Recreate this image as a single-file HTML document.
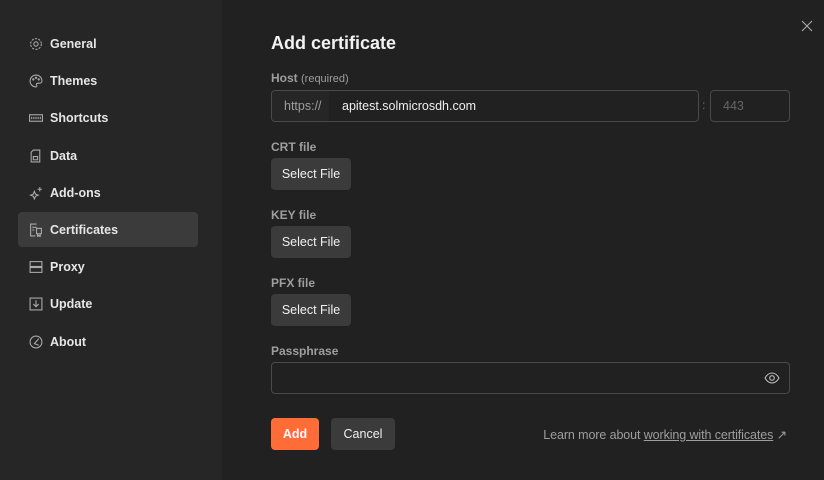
<!DOCTYPE html>
<html><head><style>
*{box-sizing:border-box;margin:0;padding:0}
body{width:824px;height:480px;background:#212121;font-family:"Liberation Sans",sans-serif;color:#e6e6e6;position:relative;overflow:hidden}
.side{position:absolute;left:0;top:0;width:222px;height:480px;background:#262626}
.item{position:absolute;left:18px;width:180px;height:35px;border-radius:4px;font-size:12.5px;font-weight:bold;color:#e6e6e6;line-height:36px;padding-left:32px}
.item svg{position:absolute;left:11px;top:11px}
.sel{background:#3b3b3b}
.abs{position:absolute}
.lbl{position:absolute;left:271px;font-size:12px;font-weight:bold;color:#9e9e9e}
.btn{position:absolute;left:271px;width:80px;height:32px;background:#3b3b3b;border-radius:4px;font-size:12.5px;color:#f0f0f0;text-align:center;line-height:32px}
.box{position:absolute;border:1px solid #4a4a4a;border-radius:4px}
</style></head><body>
<div class="side">
<div class="item" style="top:26px"><svg width="14" height="14" viewBox="0 0 13 13" fill="none" stroke="#aaa"><circle cx="6.5" cy="6.5" r="2"/><circle cx="6.5" cy="6.5" r="5" stroke-dasharray="2 1.2"/></svg>General</div>
<div class="item" style="top:63px"><svg width="14" height="14" viewBox="0 0 13 13" fill="none" stroke="#aaa"><path d="M6.5 1a5.5 5.5 0 1 0 0 11c1 0 1-1 .5-1.7-.5-.8 0-1.8 1-1.8H10a2 2 0 0 0 2-2C12 3.4 9.6 1 6.5 1z"/><circle cx="4" cy="5" r=".6"/><circle cx="6.5" cy="3.5" r=".6"/><circle cx="9" cy="5" r=".6"/></svg>Themes</div>
<div class="item" style="top:100px"><svg width="14" height="14" viewBox="0 0 13 13" fill="none" stroke="#aaa"><rect x="0.5" y="3.5" width="12" height="6"/><path d="M2.5 5.5v2M4.5 5.5v2M6.5 5.5v2M8.5 5.5v2M10.5 5.5v2"/></svg>Shortcuts</div>
<div class="item" style="top:138px"><svg width="14" height="14" viewBox="0 0 13 13" fill="none" stroke="#aaa"><path d="M4 1h6v11H2V3z"/><rect x="4" y="7" width="4" height="3"/></svg>Data</div>
<div class="item" style="top:175px"><svg width="14" height="14" viewBox="0 0 13 13" fill="none" stroke="#aaa"><path d="M5 5l1 2.5 2.5 1-2.5 1L5 12l-1-2.5L1.5 8.5 4 7.5z M10 1v4 M8 3h4"/></svg>Add-ons</div>
<div class="item sel" style="top:212px"><svg width="14" height="14" viewBox="0 0 13 13" fill="none" stroke="#aaa"><path d="M7 1H1.5v11H6 M3 4h4 M3 6.5h2"/><rect x="7" y="5" width="4.5" height="5"/><path d="M8 10v2.5l1.2-1 1.2 1V10"/></svg>Certificates</div>
<div class="item" style="top:249px"><svg width="14" height="14" viewBox="0 0 13 13" fill="none" stroke="#aaa"><rect x="1" y="1.5" width="11" height="4.5"/><rect x="1" y="7" width="11" height="4.5"/></svg>Proxy</div>
<div class="item" style="top:286px"><svg width="14" height="14" viewBox="0 0 13 13" fill="none" stroke="#aaa"><rect x="1" y="1" width="11" height="11"/><path d="M6.5 3v6 M4 6.5l2.5 2.5 2.5-2.5"/></svg>Update</div>
<div class="item" style="top:324px"><svg width="14" height="14" viewBox="0 0 13 13" fill="none" stroke="#aaa"><circle cx="6.5" cy="6.5" r="5.5"/><path d="M9 3.5L5 8l4 1.5"/></svg>About</div>
</div>
<svg class="abs" style="left:801px;top:20px" width="12" height="12" viewBox="0 0 12 12" stroke="#aaa" stroke-width="1.1"><path d="M1 1l10 10M11 1L1 11"/></svg>
<div class="abs" style="left:271px;top:33px;font-size:18px;font-weight:bold;color:#f2f2f2">Add certificate</div>
<div class="lbl" style="top:71px">Host <span style="font-weight:normal;font-size:11px">(required)</span></div>
<div class="box" style="left:271px;top:90px;width:428px;height:32px;overflow:hidden">
 <div class="abs" style="left:0;top:0;width:57px;height:30px;background:#262626;font-size:12.5px;color:#9e9e9e;line-height:30px;padding-left:12px">https://</div>
 <div class="abs" style="left:70px;top:0;font-size:12.5px;color:#f0f0f0;line-height:30px">apitest.solmicrosdh.com</div>
</div>
<div class="abs" style="left:702px;top:98px;font-size:12px;color:#666">:</div>
<div class="box" style="left:710px;top:90px;width:80px;height:32px;font-size:12.5px;color:#666;line-height:30px;padding-left:12px">443</div>
<div class="lbl" style="top:140px">CRT file</div>
<div class="btn" style="top:158px">Select File</div>
<div class="lbl" style="top:208px">KEY file</div>
<div class="btn" style="top:226px">Select File</div>
<div class="lbl" style="top:276px">PFX file</div>
<div class="btn" style="top:294px">Select File</div>
<div class="lbl" style="top:344px">Passphrase</div>
<div class="box" style="left:271px;top:362px;width:519px;height:32px"></div>
<svg class="abs" style="left:764px;top:371px" width="16" height="14" viewBox="0 0 16 14" fill="none" stroke="#bbb" stroke-width="1.1"><path d="M1 7c2-3.5 4.5-5 7-5s5 1.5 7 5c-2 3.5-4.5 5-7 5S3 10.5 1 7z"/><circle cx="8" cy="7" r="2.3"/></svg>
<div class="abs" style="left:271px;top:418px;width:48px;height:32px;background:#ff6c37;border-radius:4px;font-size:12.5px;font-weight:bold;color:#fff;text-align:center;line-height:32px">Add</div>
<div class="abs" style="left:331px;top:418px;width:64px;height:32px;background:#3b3b3b;border-radius:4px;font-size:12.5px;color:#f0f0f0;text-align:center;line-height:32px">Cancel</div>
<div class="abs" style="right:37px;top:427px;font-size:12.5px;letter-spacing:-0.1px;color:#9e9e9e">Learn more about <span style="text-decoration:underline">working with certificates</span> ↗</div>
</body></html>
